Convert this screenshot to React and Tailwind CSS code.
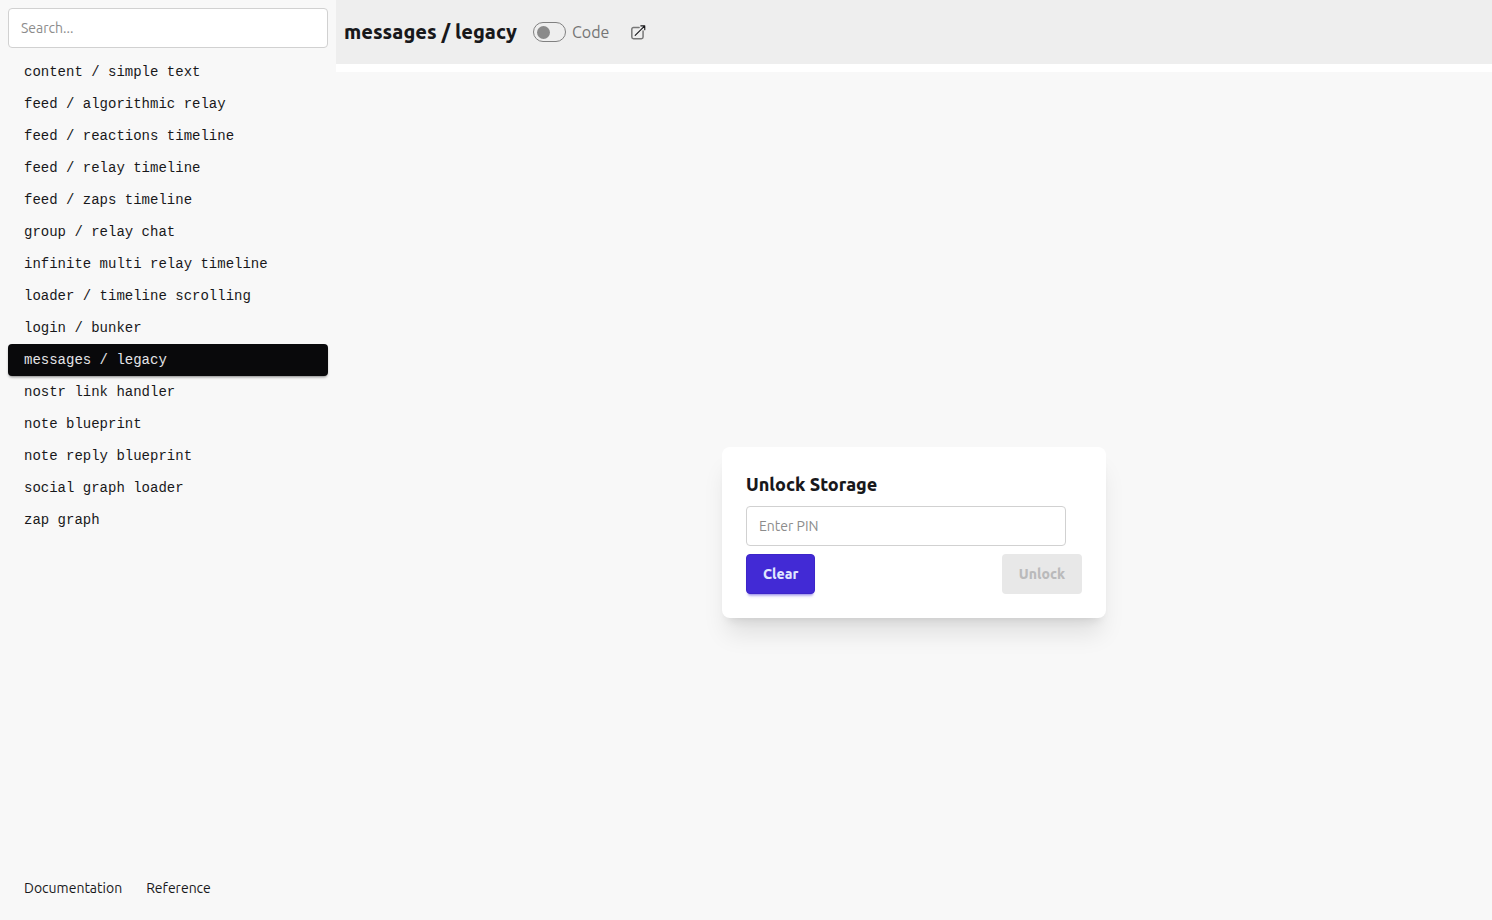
import { useState } from 'react';

const EXAMPLES = [
  'content / simple text',
  'feed / algorithmic relay',
  'feed / reactions timeline',
  'feed / relay timeline',
  'feed / zaps timeline',
  'group / relay chat',
  'infinite multi relay timeline',
  'loader / timeline scrolling',
  'login / bunker',
  'messages / legacy',
  'nostr link handler',
  'note blueprint',
  'note reply blueprint',
  'social graph loader',
  'zap graph',
];

const inputStyle =
  'h-10 w-80 rounded-sm border border-[#d1d1d1] bg-white px-3 text-sm text-[#18181b] placeholder:text-[#8c8c8c]';

function ExternalLinkIcon() {
  return (
    <svg className="size-[18px]" viewBox="0 0 24 24" fill="none" strokeLinecap="round" strokeLinejoin="round" aria-hidden="true">
      <path stroke="#777777" strokeWidth="2" d="M13.5 6H6a2.25 2.25 0 0 0-2.25 2.25v10.5A2.25 2.25 0 0 0 6 21h10.5a2.25 2.25 0 0 0 2.25-2.25V10.5" />
      <path stroke="currentColor" strokeWidth="1.5" d="M8.25 16.5 21 3.75m0 0h-5.25M21 3.75V9" />
    </svg>
  );
}

function Sidebar({ selected, onSelect }) {
  const [search, setSearch] = useState('');
  const items = EXAMPLES.filter(name => name.includes(search.toLowerCase()));

  return (
    <aside className="flex w-84 shrink-0 flex-col gap-2 bg-[#f8f8f8] p-2">
      <input
        type="text"
        aria-label="Search examples"
        placeholder="Search..."
        className={inputStyle}
        value={search}
        onChange={(e) => setSearch(e.target.value)}
      />
      <ul className="flex-1 font-['Liberation_Mono',monospace] text-sm">
        {items.map(name => (
          <li key={name}>
            <button
              onClick={() => onSelect(name)}
              className={`flex h-8 w-full cursor-pointer items-center rounded-sm px-4 ${
                name === selected
                  ? 'bg-[#09090b] text-[#e4e4e7] shadow-[0_2px_3px_-1px_rgba(9,9,11,0.5)]'
                  : 'hover:bg-[#eeeeee]'
              }`}
            >
              {name}
            </button>
          </li>
        ))}
      </ul>
      <nav className="flex h-12 items-center gap-6 px-4 text-sm">
        <a href="#documentation">Documentation</a>
        <a href="#reference">Reference</a>
      </nav>
    </aside>
  );
}

function UnlockCard() {
  const [pin, setPin] = useState('');

  return (
    <form
      onSubmit={(e) => e.preventDefault()}
      className="flex w-96 flex-col gap-2 rounded-lg bg-white p-6 shadow-[0_20px_25px_-5px_rgba(0,0,0,0.1),0_8px_10px_-6px_rgba(0,0,0,0.1)]"
    >
      <h2 className="text-lg/[27px] font-extrabold">Unlock Storage</h2>
      <input
        type="password"
        aria-label="PIN"
        placeholder="Enter PIN"
        className={inputStyle}
        value={pin}
        onChange={(e) => setPin(e.target.value)}
      />
      <div className="flex justify-between text-sm font-extrabold">
        <button
          type="button"
          onClick={() => setPin('')}
          className="h-10 cursor-pointer rounded-sm border border-[#3d25c9] bg-[#422ad5] px-4 text-[#e0e7ff] shadow-[0_3px_2px_-2px_rgba(66,42,213,0.3),0_4px_3px_-2px_rgba(66,42,213,0.3)]"
        >
          Clear
        </button>
        <button
          type="submit"
          disabled={!pin}
          className="h-10 rounded-sm border border-transparent bg-[#422ad5] px-4 text-[#e0e7ff] disabled:bg-[#e8e8e8] disabled:text-[#bababb]"
        >
          Unlock
        </button>
      </div>
    </form>
  );
}

export default function App() {
  const [selected, setSelected] = useState('messages / legacy');
  const [showCode, setShowCode] = useState(false);

  return (
    <div className="flex h-screen bg-white font-['Ubuntu','Noto_Sans',sans-serif] text-[#18181b]">
      <Sidebar selected={selected} onSelect={setSelected} />

      <div className="flex min-w-0 flex-1 flex-col gap-2 overflow-hidden">
        <header className="flex h-16 shrink-0 items-center bg-[#eeeeee] px-2">
          <h1 className="text-xl font-extrabold">{selected}</h1>
          <label className="ml-4 flex cursor-pointer items-center gap-1.5 text-[#757575]">
            <input
              type="checkbox"
              checked={showCode}
              onChange={(e) => setShowCode(e.target.checked)}
              className="flex h-5 w-[33px] cursor-pointer appearance-none items-center rounded-full border border-[#808080] px-[3px] before:size-[13px] before:rounded-full before:bg-[#8a8a8a] checked:justify-end"
            />
            Code
          </label>
          <a href="#source" aria-label="Open source" className="ml-5">
            <ExternalLinkIcon />
          </a>
        </header>

        {/* Example preview, a full screen tall under the header */}
        <main className="flex h-screen shrink-0 items-center justify-center bg-[#f8f8f8]">
          <UnlockCard />
        </main>
      </div>
    </div>
  );
}
